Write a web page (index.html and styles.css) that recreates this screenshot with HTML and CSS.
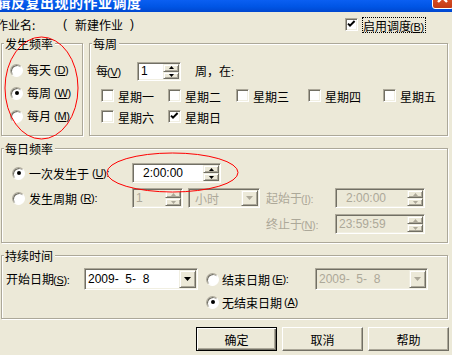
FILE: index.html
```html
<!DOCTYPE html>
<html>
<head>
<meta charset="utf-8">
<link rel="stylesheet" href="styles.css">
</head>
<body>
<div class="win">
  <div class="titlebar">
    <span class="title">编辑反复出现的作业调度</span>
    <span class="close"><svg width="20" height="20" viewBox="0 0 20 20"><path d="M5 5L14 14M14 5L5 14" stroke="#fff" stroke-width="2.4"/></svg></span>
  </div>

  <div class="jobrow">
    <span class="job-lbl">作业名:</span>
    <span class="job-name"><span class="par">(</span><span class="nm">新建作业</span><span class="par">)</span></span>
    <span class="chkopt">
      <span class="chk"><svg width="11" height="11" viewBox="0 0 11 11"><path d="M2 4.6l2 2 4.6-4.6" fill="none" stroke="#000" stroke-width="2"/></svg></span>
      <span class="focus">启用调度<span class="k">(<u>B</u>)</span></span>
    </span>
  </div>

  <div class="row2">
    <div class="group g-freq">
      <span class="caption">发生频率</span>
      <div class="radios">
        <span class="opt"><span class="radio"></span>每天<span class="k">(<u>D</u>)</span></span>
        <span class="opt"><span class="radio on"></span>每周<span class="k">(<u>W</u>)</span></span>
        <span class="opt"><span class="radio"></span>每月<span class="k">(<u>M</u>)</span></span>
      </div>
    </div>
    <div class="group g-week">
      <span class="caption">每周</span>
      <div class="week-top">
        <span class="lbl-v">每<span class="k">(<u>V</u>)</span></span>
        <span class="field w-every">
          <span class="val">1</span>
          <span class="spinbtns">
            <span class="sb"><svg width="5" height="3" viewBox="0 0 5 3"><path d="M2.5 0L5 3H0z"/></svg></span>
            <span class="sb"><svg width="5" height="3" viewBox="0 0 5 3"><path d="M0 0h5L2.5 3z"/></svg></span>
          </span>
        </span>
        <span class="lbl-zai">周，在<span class="colon">:</span></span>
      </div>
      <div class="days">
        <span class="day"><span class="chk"></span><span class="dt">星期一</span></span>
        <span class="day"><span class="chk"></span><span class="dt">星期二</span></span>
        <span class="day"><span class="chk"></span><span class="dt">星期三</span></span>
        <span class="day"><span class="chk"></span><span class="dt">星期四</span></span>
        <span class="day"><span class="chk"></span><span class="dt">星期五</span></span>
      </div>
      <div class="days">
        <span class="day"><span class="chk"></span><span class="dt">星期六</span></span>
        <span class="day"><span class="chk"><svg width="11" height="11" viewBox="0 0 11 11"><path d="M2 4.6l2 2 4.6-4.6" fill="none" stroke="#000" stroke-width="2"/></svg></span><span class="dt">星期日</span></span>
      </div>
    </div>
  </div>

  <div class="group g-daily">
    <span class="caption">每日频率</span>
    <div class="drow drow1">
      <span class="ropt"><span class="radio on"></span>一次发生于<span class="k">(<u>U</u>):</span></span>
      <span class="field w-time">
        <span class="val pad-h">2:00:00</span>
        <span class="spinbtns">
          <span class="sb"><svg width="5" height="3" viewBox="0 0 5 3"><path d="M2.5 0L5 3H0z"/></svg></span>
          <span class="sb"><svg width="5" height="3" viewBox="0 0 5 3"><path d="M0 0h5L2.5 3z"/></svg></span>
        </span>
      </span>
    </div>
    <div class="drow drow2">
      <span class="ropt"><span class="radio"></span>发生周期<span class="k">(<u>R</u>):</span></span>
      <span class="field dis w-num">
        <span class="val">1</span>
        <span class="spinbtns">
          <span class="sb"><svg width="5" height="3" viewBox="0 0 5 3"><path d="M2.5 0L5 3H0z"/></svg></span>
          <span class="sb"><svg width="5" height="3" viewBox="0 0 5 3"><path d="M0 0h5L2.5 3z"/></svg></span>
        </span>
      </span>
      <span class="field dis w-unit">
        <span class="val cjk">小时</span>
        <span class="dd"><svg width="7" height="4" viewBox="0 0 7 4"><path d="M0 0h7L3.5 4z"/></svg></span>
      </span>
      <span class="lbl-dis">起始于<span class="k">(<u>I</u>):</span></span>
      <span class="field dis w-time2">
        <span class="val pad-h">2:00:00</span>
        <span class="spinbtns">
          <span class="sb"><svg width="5" height="3" viewBox="0 0 5 3"><path d="M2.5 0L5 3H0z"/></svg></span>
          <span class="sb"><svg width="5" height="3" viewBox="0 0 5 3"><path d="M0 0h5L2.5 3z"/></svg></span>
        </span>
      </span>
    </div>
    <div class="drow drow3">
      <span class="lbl-dis">终止于<span class="k">(<u>N</u>):</span></span>
      <span class="field dis w-time2">
        <span class="val">23:59:59</span>
        <span class="spinbtns">
          <span class="sb"><svg width="5" height="3" viewBox="0 0 5 3"><path d="M2.5 0L5 3H0z"/></svg></span>
          <span class="sb"><svg width="5" height="3" viewBox="0 0 5 3"><path d="M0 0h5L2.5 3z"/></svg></span>
        </span>
      </span>
    </div>
  </div>

  <div class="group g-dur">
    <span class="caption">持续时间</span>
    <div class="urow1">
      <span class="lbl-start">开始日期<span class="k">(<u>S</u>):</span></span>
      <span class="field w-date">
        <span class="val">2009-  5-  8</span>
        <span class="dd"><svg width="7" height="4" viewBox="0 0 7 4"><path d="M0 0h7L3.5 4z"/></svg></span>
      </span>
      <span class="ropt2"><span class="radio"></span>结束日期<span class="k">(<u>E</u>):</span></span>
      <span class="field dis w-date2">
        <span class="val">2009-  5-  8</span>
        <span class="dd"><svg width="7" height="4" viewBox="0 0 7 4"><path d="M0 0h7L3.5 4z"/></svg></span>
      </span>
    </div>
    <div class="urow2">
      <span class="ropt3"><span class="radio on"></span>无结束日期<span class="k">(<u>A</u>)</span></span>
    </div>
  </div>

  <div class="buttons">
    <span class="btn def">确定</span>
    <span class="btn">取消</span>
    <span class="btn">帮助</span>
  </div>

  <svg class="marks" width="452" height="355" viewBox="0 0 452 355">
    <ellipse cx="41.5" cy="88" rx="36.5" ry="51" fill="none" stroke="#f00" stroke-width="1"/>
    <ellipse cx="172.5" cy="172.5" rx="65.5" ry="19.5" fill="none" stroke="#f00" stroke-width="1"/>
  </svg>
</div>
</body>
</html>
```

FILE: styles.css
```css
* { box-sizing: border-box; }
html, body { margin: 0; padding: 0; }
body {
  width: 452px;
  height: 355px;
  overflow: hidden;
  background: #ece9d8;
  color: #000;
  font-family: "Noto Sans CJK SC", sans-serif;
  font-size: 12px;
  line-height: 13px;
  text-autospace: no-autospace;
}
u { text-decoration: underline; text-underline-offset: 1px; }
.k { font-family: "Liberation Sans", sans-serif; font-size: 11px; letter-spacing: -0.3px; margin-left: -1px; }
.colon { font-family: "Liberation Sans", sans-serif; font-size: 11px; }

.win { position: relative; width: 452px; height: 355px; overflow: hidden; }

.titlebar {
  position: relative;
  height: 12px;
  overflow: hidden;
  background: linear-gradient(#0a5ff2, #0055e5 55%, #0047cf);
}
.title {
  display: block;
  margin: -5px 0 0 -18px;
  color: #fff;
  font-family: "Noto Sans CJK SC", sans-serif;
  font-weight: 700;
  font-size: 14px;
  line-height: 14px;
  letter-spacing: 0.5px;
  white-space: nowrap;
}
.close {
  position: absolute;
  right: -2px;
  top: -13px;
  width: 22px;
  height: 22px;
  border: 1px solid #fff;
  border-radius: 3px;
  background: linear-gradient(#e98a63, #d64a22 60%, #c23b15);
}
.close svg { display: block; }

.jobrow { display: flex; align-items: center; height: 15px; margin-top: 5px; }
.job-lbl { margin-left: -4px; width: 67px; flex: none; }
.job-name { width: 282px; flex: none; display: flex; }
.par { font-family: "Liberation Sans", sans-serif; width: 12px; }
.nm { width: 48px; }
.job-name .par:last-child { text-align: right; width: 11px; }
.chkopt { display: flex; align-items: center; gap: 4px; }
.focus { border: 1px dotted #000; height: 16px; padding: 1px 1px 0 0; line-height: 13px; }

.chk {
  flex: none;
  width: 13px;
  height: 13px;
  display: flex;
  background: #fff;
  border: 1px solid;
  border-color: #aca899 #fff #fff #aca899;
  box-shadow: inset 1px 1px 0 #716f64, inset -1px -1px 0 #f1efe2;
}
.chk svg { display: block; }

.radio {
  flex: none;
  width: 13px;
  height: 13px;
  border-radius: 50%;
  background: #fff;
  border: 1px solid;
  border-color: #aca899 #fff #fff #aca899;
  box-shadow: inset 1px 1px 0 #716f64;
  display: flex;
  align-items: center;
  justify-content: center;
}
.radio.on::after { content: ""; width: 4px; height: 4px; border-radius: 50%; background: #000; }

.group { border: 1px solid #aca899; box-shadow: 1px 1px 0 #fff, inset 1px 1px 0 #fff; }
.caption {
  display: block;
  width: max-content;
  margin: -7px 0 0 2px;
  padding: 0 2px 0 1px;
  background: #ece9d8;
}

.row2 { display: flex; gap: 6px; margin: 11px 0 0 1px; }
.g-freq { width: 82px; height: 93px; flex: none; }
.g-week { width: 359px; height: 93px; flex: none; }

.radios { display: flex; flex-direction: column; gap: 9px; margin-top: 13px; padding-left: 8px; }
.opt { display: flex; align-items: center; gap: 4px; height: 14px; line-height: 14px; white-space: nowrap; }

.week-top { display: flex; align-items: center; height: 19px; margin-top: 12px; padding-left: 6px; }
.lbl-v { width: 41px; flex: none; }
.lbl-zai { margin-left: 14px; }

.days {
  display: grid;
  grid-template-columns: 67px 68px 72px 75px auto;
  grid-auto-rows: 13px;
  margin-top: 8px;
  padding-left: 11px;
}
.day { display: flex; align-items: center; gap: 4px; white-space: nowrap; }
.dt { padding-top: 2px; }

/* fields */
.field {
  flex: none;
  display: flex;
  align-items: stretch;
  background: #fff;
  border: 1px solid;
  border-color: #aca899 #fff #fff #aca899;
  box-shadow: inset 1px 1px 0 #716f64, inset -1px -1px 0 #f1efe2;
  font-family: "Liberation Sans", sans-serif;
  font-size: 12px;
}
.field .val { flex: 1; display: flex; align-items: center; padding-left: 3px; white-space: pre; }
.field .val.cjk { font-family: "Noto Sans CJK SC", sans-serif; padding-left: 6px; }
.field .val.pad-h { padding-left: 10px; }
.field.dis { background: #ece9d8; color: #aca899; }

.spinbtns { flex: none; display: flex; flex-direction: column; width: 16px; margin: 1px; }
.sb, .dd {
  display: flex;
  align-items: center;
  justify-content: center;
  background: #ece9d8;
  border: 1px solid;
  border-color: #f1efe2 #716f64 #716f64 #f1efe2;
  box-shadow: inset 1px 1px 0 #fff, inset -1px -1px 0 #aca899;
}
.sb { flex: 1; }
.dd { flex: none; width: 17px; margin: 1px; }
.sb svg, .dd svg { display: block; fill: #000; }
.dis .sb svg, .dis .dd svg { fill: #aca899; }

.w-every { width: 44px; height: 19px; }
.w-time { width: 89px; height: 20px; }
.w-num { width: 51px; height: 20px; }
.w-unit { width: 72px; height: 20px; margin-left: 5px; }
.w-time2 { width: 90px; height: 20px; }
.w-date { width: 114px; height: 22px; }
.w-date2 { width: 113px; height: 22px; }

.g-daily { width: 447px; height: 95px; margin: 12px 0 0 1px; }
.drow { display: flex; align-items: center; height: 20px; padding-left: 10px; white-space: nowrap; }
.drow1 { margin-top: 8px; }
.drow2 { margin-top: 5px; }
.drow3 { margin-top: 6px; padding-left: 264px; }
.ropt { width: 120px; flex: none; display: flex; align-items: center; gap: 4px; }
.lbl-dis { width: 69px; flex: none; color: #aca899; }
.drow2 .lbl-dis { margin-left: 6px; }

.g-dur { width: 447px; height: 64px; margin: 12px 0 0 1px; }
.urow1 { display: flex; align-items: center; height: 22px; margin-top: 6px; padding-left: 4px; white-space: nowrap; }
.lbl-start { width: 78px; flex: none; }
.ropt2 { width: 109px; flex: none; margin-left: 8px; display: flex; align-items: center; gap: 3px; }
.urow2 { display: flex; height: 14px; margin-top: 5px; padding-left: 204px; }
.ropt3 { display: flex; align-items: center; gap: 3px; white-space: nowrap; }

.buttons { display: flex; justify-content: flex-end; gap: 5px; margin-top: 8px; padding-right: 3px; }
.btn {
  width: 81px;
  height: 24px;
  display: flex;
  align-items: center;
  justify-content: center;
  background: #ece9d8;
  border: 1px solid;
  border-color: #fff #716f64 #716f64 #fff;
  box-shadow: inset -1px -1px 0 #aca899;
}
.btn.def {
  border-color: #000;
  box-shadow: inset 1px 1px 0 #fff, inset -1px -1px 0 #716f64, inset -2px -2px 0 #aca899;
}

.marks { position: absolute; left: 0; top: 0; pointer-events: none; }
```
